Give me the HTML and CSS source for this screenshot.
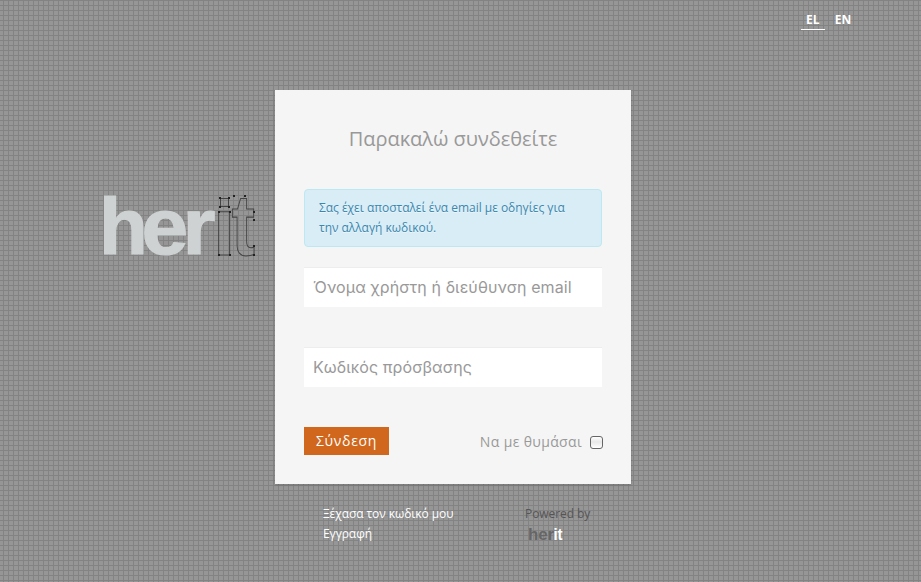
FILE: index.html
```
<!DOCTYPE html>
<html lang="el">
<head>
<meta charset="utf-8">
<title>herit</title>
<link rel="stylesheet" href="styles.css">
</head>
<body>
<nav class="languages"><a class="current">EL</a><a>EN</a></nav>
<main class="content">
  <svg class="logo" width="160" height="70" viewBox="0 0 160 70">
    <g class="logo-solid"><text transform="translate(0 63)">h</text><text transform="translate(42.500 63) scale(1.050 1)">e</text><text transform="translate(83.500 63) scale(1.060 1)">r</text></g>
    <g class="logo-outline"><text transform="translate(114 63.500) scale(1 1.030)">ı</text><text transform="translate(132.500 63.500) scale(.88 1.100)">t</text><rect x="121.500" y="7.500" width="8" height="8"/></g>
    <path class="handles" d="M120 6h2v2h-2zM129 6h2v2h-2zM120 15h2v2h-2zM129 15h2v2h-2zM119 20h2v2h-2zM130 20h2v2h-2zM119 63h2v2h-2zM130 63h2v2h-2zM134 4h2v2h-2zM145 4h2v2h-2zM154 20h2v2h-2zM154 28h2v2h-2zM154 54h2v2h-2zM154 63h2v2h-2z"/>
  </svg>
  <form class="login">
    <h1>Παρακαλώ συνδεθείτε</h1>
    <div class="alert">Σας έχει αποσταλεί ένα email με οδηγίες για την αλλαγή κωδικού.</div>
    <input class="field" type="text" placeholder="Όνομα χρήστη ή διεύθυνση email">
    <input class="field" type="password" placeholder="Κωδικός πρόσβασης">
    <div class="actions">
      <button type="button">Σύνδεση</button>
      <label>Να με θυμάσαι<input class="check" type="checkbox"></label>
    </div>
  </form>
</main>
<footer>
  <div class="links"><a>Ξέχασα τον κωδικό μου</a><a>Εγγραφή</a></div>
  <div class="powered"><span>Powered by</span>
    <svg class="mini" width="40" height="20" viewBox="0 0 40 20"><text x="2" y="16" textLength="26" lengthAdjust="spacingAndGlyphs">her</text><text class="white" x="27.500" y="16" textLength="9" lengthAdjust="spacingAndGlyphs">it</text></svg>
  </div>
</footer>
</body>
</html>
```
FILE: styles.css
```
* { box-sizing: border-box; }
body {
  margin: 0;
  height: 582px;
  overflow: hidden;
  font: 12px/20px "Open Sans", sans-serif;
  background:
    repeating-linear-gradient(90deg, transparent 0 3px, #838384 3px 4px, transparent 4px 5px),
    repeating-linear-gradient(180deg, #838384 0 1px, #969696 1px 5px);
}
.languages { display: flex; gap: 5px; padding: 10px 0 0 801px; height: 90px; color: #fff; font-weight: 700; }
.languages a { padding: 0 5px; height: 20px; letter-spacing: .1px; }
.languages .current { border-bottom: 1px solid #fff; }
.content { display: flex; padding-left: 99px; height: 394px; }
.logo { margin: 101px 16px 0 0; flex: none; overflow: visible; }
.logo text { font: bold 80px "Liberation Sans", sans-serif; }
.logo-solid { fill: #ced2d3; stroke: #ced2d3; stroke-width: 1.200px; }
.logo-outline { fill: none; stroke: #444; stroke-width: 1px; }
.handles { fill: #222; }
.login { width: 356px; padding: 29px; background: #f5f5f5; box-shadow: 0 1px 2px rgba(0,0,0,.2); }
h1 { margin: 0 0 30px; font-size: 20px; line-height: 40px; font-weight: 400; text-align: center; color: #999; letter-spacing: -.03px; }
.alert { height: 58px; padding: 8px 30px 8px 14px; margin-bottom: 20px; border: 1px solid #bce8f1; border-radius: 4px; background: #d9edf7; color: #3a87ad; text-shadow: 0 1px 0 rgba(255,255,255,.5); letter-spacing: -.03px; }
.field { display: block; width: 298px; height: 40px; margin: 0 0 40px; padding: 0 9px 2px; border: 0; border-top: 1px solid #ededed; background: #fff; font: 16px Inter, sans-serif; letter-spacing: .1px; }
.field::placeholder { color: #999; opacity: 1; }
.actions { display: flex; justify-content: space-between; }
button { width: 85px; height: 28px; padding: 0 0 2px; border: 0; background: #d0671c; color: #fff; font: 14px "Open Sans", sans-serif; letter-spacing: .7px; }
label { display: flex; align-items: center; height: 30px; color: #999; font-size: 14px; letter-spacing: .35px; }
.check { appearance: none; width: 13px; height: 13px; margin: 0 -1px 0 8px; border: 1px solid #666; border-radius: 3px; background: linear-gradient(#fff, #e8e8e8 45%, #fff); }
footer { display: flex; padding: 20px 0 0 323px; color: #fff; }
.links { display: flex; flex-direction: column; width: 202px; letter-spacing: -.07px; }
.powered { color: #555; letter-spacing: -.08px; }
.powered span { display: block; }
.mini { display: block; margin-left: 1px; }
.mini text { font: bold 17px "Liberation Sans", sans-serif; fill: #666; }
.mini .white { fill: #fff; }
```
